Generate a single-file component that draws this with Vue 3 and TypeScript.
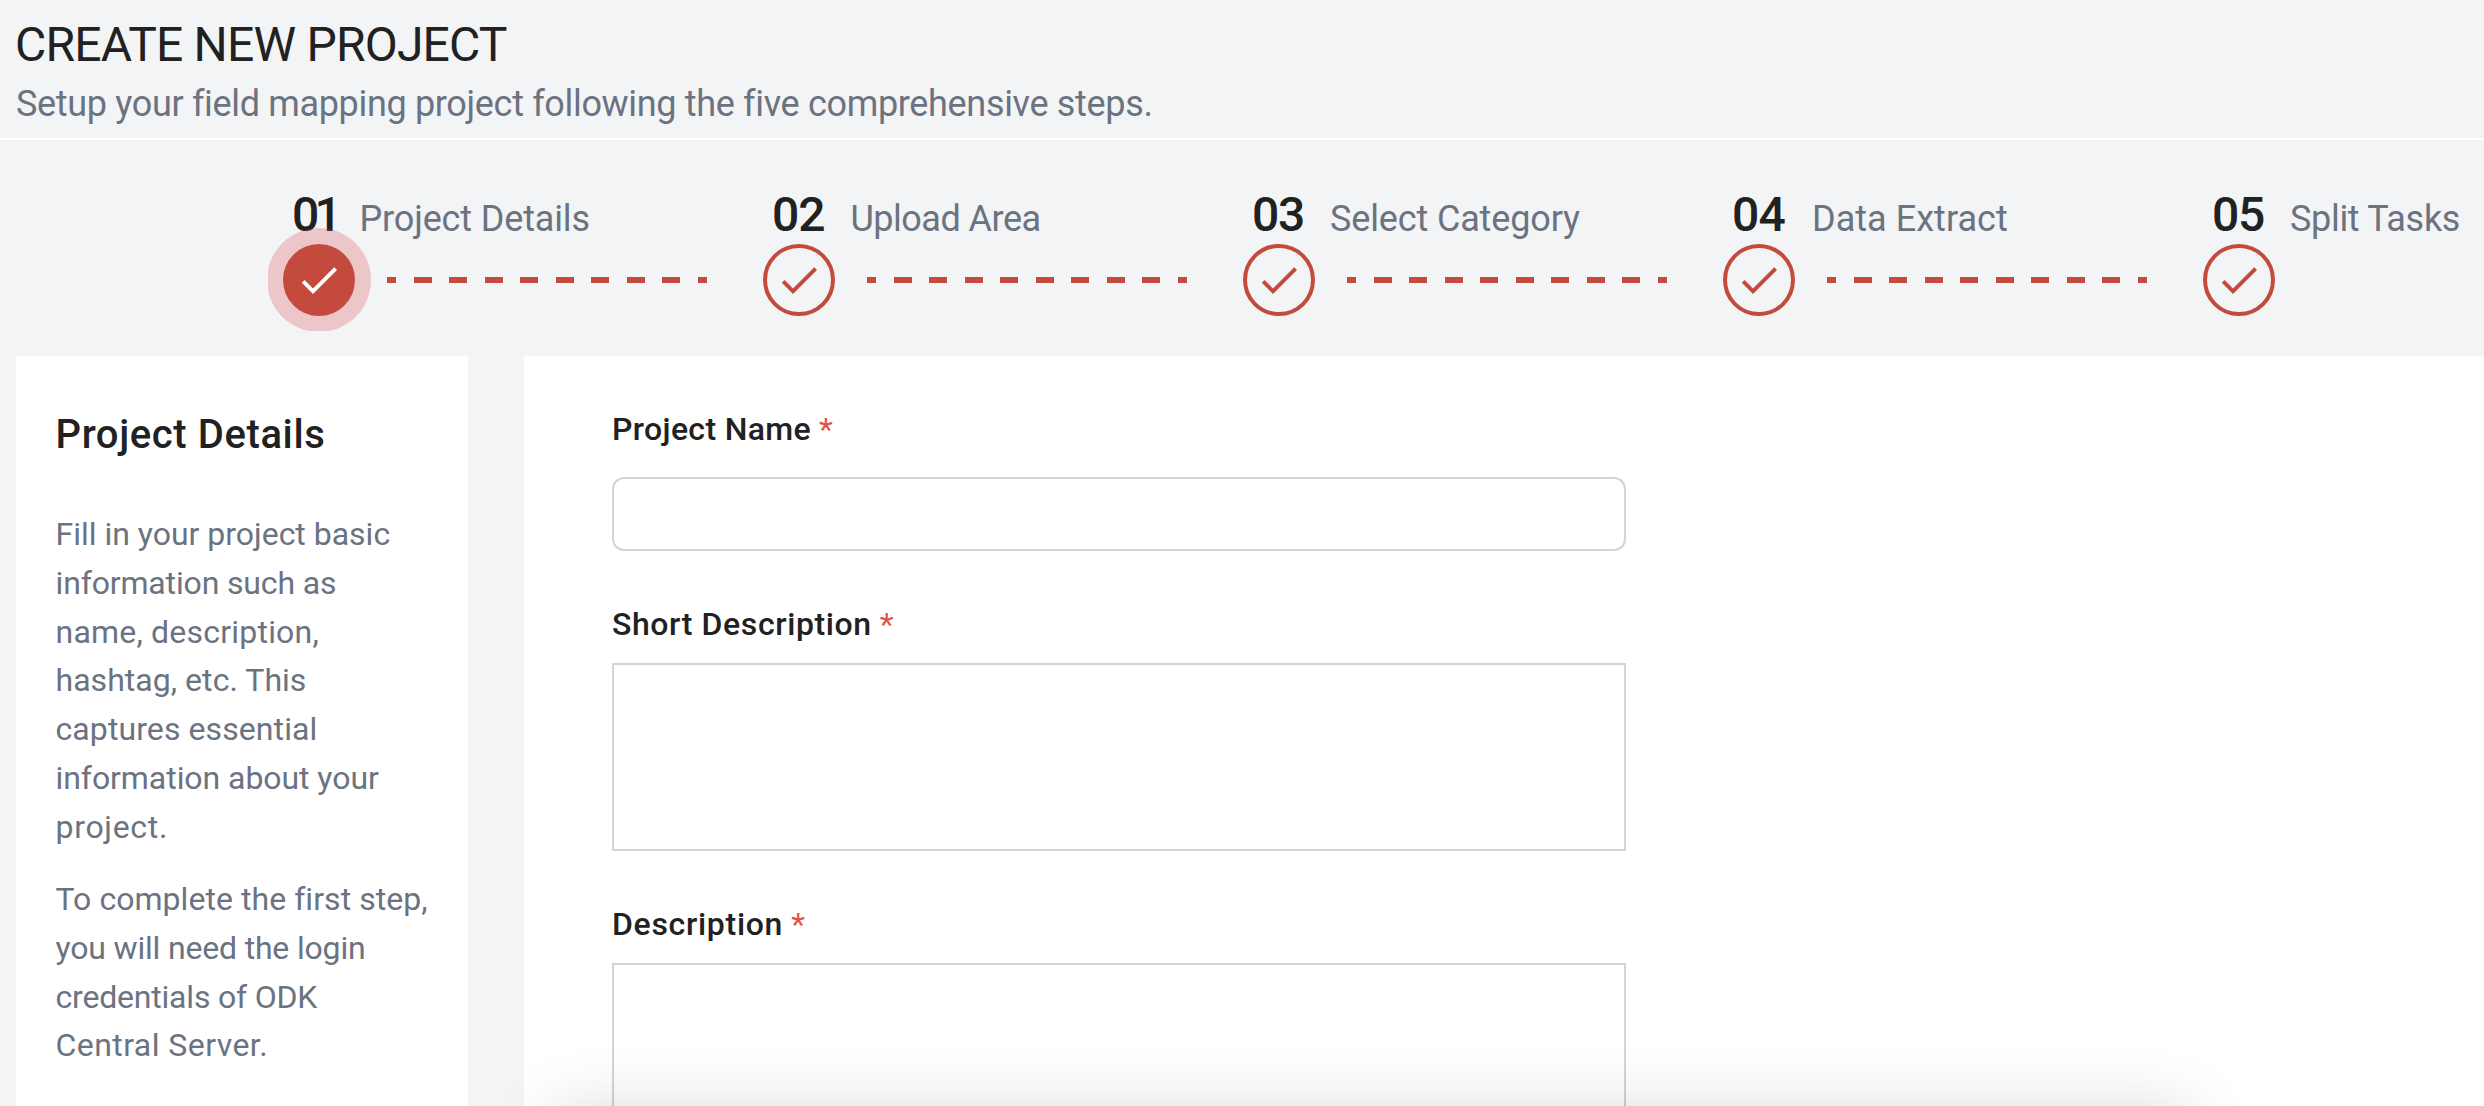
<script setup lang="ts">
interface Step {
  num: string
  label: string
  active?: boolean
  numWidth: number
  numSpacing: number
  labelSpacing: number
}

interface Line {
  text: string
  spacing: number
}

const steps: Step[] = [
  { num: '01', label: 'Project Details', active: true, numWidth: 43.5, numSpacing: -4.8, labelSpacing: -0.14 },
  { num: '02', label: 'Upload Area', numWidth: 54.5, numSpacing: -1, labelSpacing: -0.51 },
  { num: '03', label: 'Select Category', numWidth: 54, numSpacing: -1.3, labelSpacing: -0.14 },
  { num: '04', label: 'Data Extract', numWidth: 56, numSpacing: -0.8, labelSpacing: 0.04 },
  { num: '05', label: 'Split Tasks', numWidth: 54, numSpacing: -1.3, labelSpacing: -0.32 },
]

const paragraphs: Line[][] = [
  [
    { text: 'Fill in your project basic', spacing: -0.01 },
    { text: 'information such as', spacing: -0.15 },
    { text: 'name, description,', spacing: 0.21 },
    { text: 'hashtag, etc. This', spacing: 0.04 },
    { text: 'captures essential', spacing: 0.09 },
    { text: 'information about your', spacing: -0.06 },
    { text: 'project.', spacing: 0.7 },
  ],
  [
    { text: 'To complete the first step,', spacing: 0.05 },
    { text: 'you will need the login', spacing: -0.18 },
    { text: 'credentials of ODK', spacing: -0.2 },
    { text: 'Central Server.', spacing: 0.44 },
  ],
]
</script>

<template>
  <div class="page">
    <header class="header">
      <h1>CREATE NEW PROJECT</h1>
      <p>Setup your field mapping project following the five comprehensive steps.</p>
    </header>

    <nav class="stepper">
      <div v-for="(s, i) in steps" :key="s.num" class="step">
        <div class="step-head">
          <span class="step-num" :style="{ width: s.numWidth + 'px', letterSpacing: s.numSpacing + 'px' }">{{ s.num }}</span>
          <span class="step-label" :style="{ letterSpacing: s.labelSpacing + 'px' }">{{ s.label }}</span>
        </div>
        <div class="step-track">
          <div class="dot" :class="{ active: s.active }">
            <span v-if="s.active" class="halo"></span>
            <svg class="check" viewBox="0 0 24 24" width="48" height="48">
              <path d="M9 16.2 4.8 12l-1.4 1.4L9 19 21 7l-1.4-1.4L9 16.2z" fill="currentColor" />
            </svg>
          </div>
          <div v-if="i < steps.length - 1" class="dashes"></div>
        </div>
      </div>
    </nav>

    <main class="content">
      <aside class="sidebar">
        <h2>Project Details</h2>
        <p v-for="(p, i) in paragraphs" :key="i">
          <span v-for="l in p" :key="l.text" :style="{ letterSpacing: l.spacing + 'px' }">{{ l.text }}</span>
        </p>
      </aside>

      <form class="form">
        <div class="field name">
          <label>Project Name<i>*</i></label>
          <input type="text" />
        </div>
        <div class="field short">
          <label>Short Description<i>*</i></label>
          <textarea></textarea>
        </div>
        <div class="field long">
          <label>Description<i>*</i></label>
          <textarea></textarea>
        </div>
      </form>
    </main>
    <div class="overlay-shadow"></div>
  </div>
</template>

<style>
html,
body {
  margin: 0;
  overflow: hidden;
}
</style>

<style scoped>
.page {
  position: relative;
  display: flex;
  flex-direction: column;
  width: 2484px;
  height: 1106px;
  overflow: hidden;
  background: #f3f4f6;
  font-family: Roboto, 'Liberation Sans', sans-serif;
  color: #212121;
}
h1,
h2,
p {
  margin: 0;
  font-weight: 400;
}
.header {
  box-sizing: border-box;
  height: 140px;
  padding: 13px 0 0 15px;
  border-bottom: 2px solid #fff;
  flex: none;
}
h1 {
  font-size: 48px;
  line-height: 64px;
  letter-spacing: -0.8px;
}
.header p {
  margin-top: 7px;
  padding-left: 1px;
  font-size: 36px;
  line-height: 40px;
  font-weight: 450;
  letter-spacing: -0.33px;
  color: #6b7280;
}
.stepper {
  box-sizing: border-box;
  display: flex;
  flex: none;
  height: 216px;
  padding: 51px 0 0 283px;
}
.step {
  flex: none;
  width: 480px;
}
.step-head {
  display: flex;
  align-items: baseline;
  gap: 24px;
  height: 53px;
  padding-left: 9px;
  line-height: 48px;
  white-space: nowrap;
}
.step-num {
  flex: none;
  font-size: 48px;
  font-weight: 500;
}
.step-label {
  margin-bottom: 1px;
  font-size: 36px;
  color: #6b7280;
}
.step-track {
  display: flex;
  align-items: center;
  gap: 32px;
}
.dot {
  position: relative;
  box-sizing: border-box;
  display: flex;
  align-items: center;
  justify-content: center;
  width: 72px;
  height: 72px;
  border: 4px solid #c44a3d;
  border-radius: 50%;
  color: #c44a3d;
}
.dot.active {
  background: #c44a3d;
  color: #fff;
}
.halo {
  position: absolute;
  inset: -20px;
  border-radius: 50%;
  clip-path: inset(0 0 1px 1px);
  background: radial-gradient(circle, transparent 35.5px, rgba(215, 63, 63, 0.25) 36px);
}
.check {
  display: block;
  flex: none;
}
.dashes {
  width: 320px;
  height: 6px;
  background: repeating-linear-gradient(
    90deg,
    #c44a3d 0 9px,
    transparent 9px 26.556px,
    #c44a3d 26.556px 35.556px
  );
}
.content {
  display: flex;
  gap: 56px;
  height: 750px;
  padding-left: 16px;
}
.sidebar {
  box-sizing: border-box;
  flex: none;
  width: 452px;
  padding: 55px 0 0 39.5px;
  background: #fff;
}
.sidebar h2 {
  margin-bottom: 51px;
  font-size: 40px;
  line-height: 48px;
  font-weight: 500;
  letter-spacing: 0.6px;
}
.sidebar p {
  margin-bottom: 23.4px;
  font-size: 32px;
  line-height: 48.8px;
  color: #6b7280;
}
.sidebar p span {
  display: block;
  white-space: nowrap;
}
.form {
  flex: 1;
  padding: 53px 0 0 88px;
  background: #fff;
}
.field {
  display: flex;
  flex-direction: column;
  width: 1014px;
}
.field label {
  font-size: 32px;
  line-height: 40px;
  font-weight: 500;
}
.field i {
  margin-left: 8px;
  font-style: normal;
  font-weight: 400;
  letter-spacing: 0;
  color: #e0524a;
}
.name label {
  letter-spacing: 0.34px;
}
.short label {
  letter-spacing: 0.6px;
}
.long label {
  letter-spacing: 0.7px;
}
.field input,
.field textarea {
  box-sizing: border-box;
  width: 100%;
  margin: 0;
  border: 2px solid #d1d5db;
  border-radius: 0;
  background: transparent;
  resize: none;
  outline: none;
}
.field input {
  height: 74px;
  margin-top: 28px;
  border-radius: 12px;
}
.field textarea {
  height: 188px;
  margin-top: 19px;
}
.short {
  margin-top: 53px;
}
.long {
  margin-top: 53px;
}
/* Shadow of the docked panel that sits just below the fold. */
.overlay-shadow {
  position: absolute;
  left: 552px;
  right: 292px;
  top: 1106px;
  height: 300px;
  border-radius: 16px;
  box-shadow: 0 2px 64px rgba(0, 0, 0, 0.145);
  pointer-events: none;
}
</style>
